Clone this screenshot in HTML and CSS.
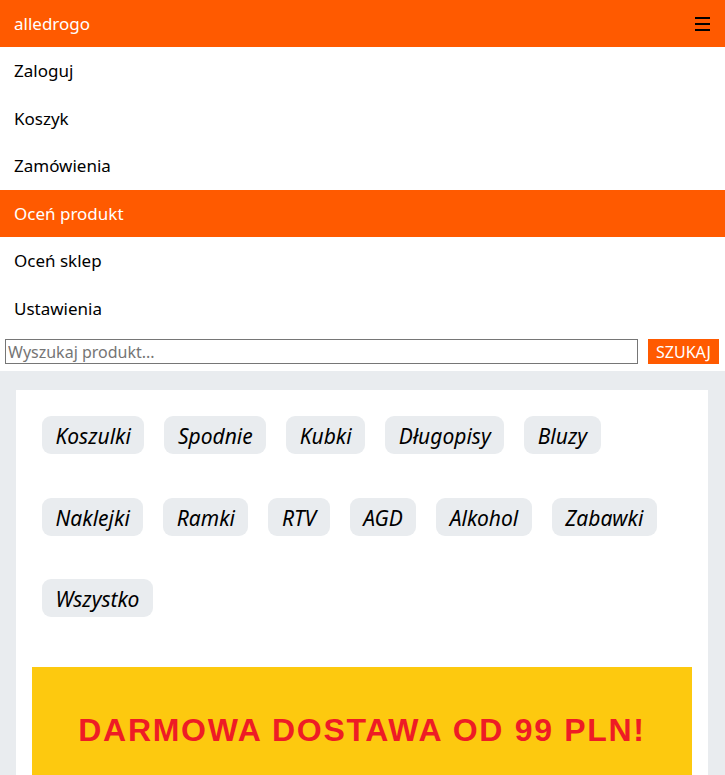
FILE: index.html
```html
<!DOCTYPE html>
<html lang="pl">
<head>
<meta charset="utf-8">
<title>alledrogo</title>
<link rel="stylesheet" href="styles.css">
</head>
<body>
<header class="topbar">
  <span class="brand">alledrogo</span>
  <span class="burger"><i></i><i></i><i></i></span>
</header>
<nav class="menu">
  <a class="menu-item" href="#">Zaloguj</a>
  <a class="menu-item" href="#">Koszyk</a>
  <a class="menu-item" href="#">Zamówienia</a>
  <a class="menu-item active" href="#">Oceń produkt</a>
  <a class="menu-item" href="#">Oceń sklep</a>
  <a class="menu-item" href="#">Ustawienia</a>
</nav>
<form class="search">
  <input class="search-input" type="text" placeholder="Wyszukaj produkt...">
  <button class="search-btn" type="button">SZUKAJ</button>
</form>
<main class="page">
  <section class="card">
    <div class="chips">
      <a class="chip" href="#">Koszulki</a>
      <a class="chip" href="#">Spodnie</a>
      <a class="chip" href="#">Kubki</a>
      <a class="chip" href="#">Długopisy</a>
      <a class="chip" href="#">Bluzy</a>
      <a class="chip" href="#">Naklejki</a>
      <a class="chip" href="#">Ramki</a>
      <a class="chip" href="#">RTV</a>
      <a class="chip" href="#">AGD</a>
      <a class="chip" href="#">Alkohol</a>
      <a class="chip" href="#">Zabawki</a>
      <a class="chip" href="#">Wszystko</a>
    </div>
    <div class="banner"><span class="banner-text">DARMOWA DOSTAWA OD 99 PLN!</span></div>
  </section>
</main>
</body>
</html>
```

FILE: styles.css
```css
* { box-sizing: border-box; }
body {
  margin: 0;
  font-family: "Noto Sans", "Open Sans", sans-serif;
  background: #ffffff;
  color: #000;
}
.topbar {
  height: 47px;
  background: #ff5a00;
  display: flex;
  align-items: center;
  justify-content: space-between;
  padding: 0 15px 0 14px;
}
.brand {
  color: #fff;
  font-size: 17px;
}
.burger {
  display: flex;
  flex-direction: column;
  gap: 4px;
  width: 15px;
}
.burger i {
  display: block;
  height: 2px;
  background: #000;
}
.menu { display: flex; flex-direction: column; }
.menu-item {
  display: block;
  height: 47.5px;
  line-height: 48px;
  padding: 0 14px;
  font-size: 17px;
  color: #000;
  text-decoration: none;
}
.menu-item.active {
  background: #ff5a00;
  color: #fff;
}
.search {
  display: flex;
  align-items: center;
  gap: 10px;
  padding: 7px 6px 7px 5px;
}
.search-input {
  flex: 1;
  height: 25px;
  border: 1px solid #767676;
  padding: 0 2px;
  font-family: "Noto Sans", sans-serif;
  font-size: 16px;
  color: #000;
  outline: none;
}
.search-input::placeholder { color: #757575; }
.search-btn {
  width: 71px;
  height: 25px;
  border: 0;
  background: #ff5a00;
  color: #fff;
  font-family: "Noto Sans", sans-serif;
  font-size: 16px;
  padding: 0;
}
.page {
  background: #e9ecef;
  padding: 19px 17px 0 16px;
}
.card {
  background: #fff;
  padding: 26px 16px 0 16px;
}
.chips {
  display: flex;
  flex-wrap: wrap;
  column-gap: 20px;
  row-gap: 43.5px;
  padding: 0 10px;
}
.chip {
  display: block;
  height: 38px;
  line-height: 40px;
  padding: 0 13.5px;
  background: #e9ecef;
  border-radius: 9px;
  font-style: italic;
  font-size: 21px;
  color: #000;
  text-decoration: none;
}
.banner {
  margin-top: 50px;
  height: 130px;
  background: #fdc90f;
  display: flex;
  justify-content: center;
  padding-top: 47px;
}
.banner-text {
  font-family: "Liberation Sans", Arial, sans-serif;
  font-weight: bold;
  font-size: 32px;
  letter-spacing: 1.7px;
  color: #ee1c25;
  line-height: 1;
  height: 32px;
}
```
